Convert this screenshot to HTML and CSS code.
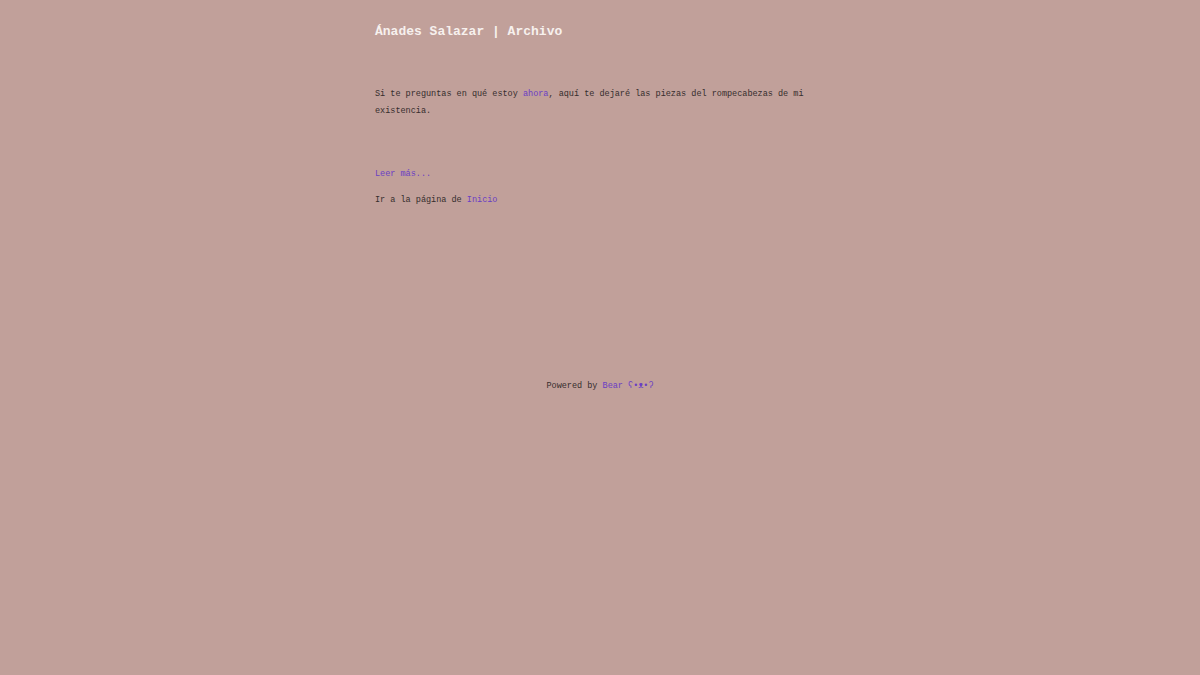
FILE: index.html
```html
<!DOCTYPE html>
<html lang="es">
<head>
<meta charset="utf-8">
<title>Ánades Salazar | Archivo</title>
<link rel="stylesheet" href="styles.css">
</head>
<body>
<div class="page">
  <header class="site-header">
    <a class="title" href="#"><h1>Ánades Salazar | Archivo</h1></a>
  </header>
  <main class="content">
    <p class="intro">Si te preguntas en qué estoy <a href="#">ahora</a>, aquí te dejaré las piezas del rompecabezas de mi existencia.</p>
    <p class="more"><a href="#">Leer más...</a></p>
    <p class="home">Ir a la página de <a href="#">Inicio</a></p>
  </main>
  <footer class="site-footer">
    Powered by <a href="#">Bear ʕ•ᴥ•ʔ</a>
  </footer>
</div>
</body>
</html>
```
FILE: styles.css
```css
html, body {
  margin: 0;
  padding: 0;
  background: #c1a09a;
  height: 100%;
}
body {
  font-family: "Liberation Mono", "DejaVu Sans Mono", monospace;
  font-size: 8.5px;
  line-height: 17px;
  color: #352d2d;
}
.page {
  width: 450px;
  margin: 0 auto;
  padding-top: 22px;
}
.title {
  text-decoration: none;
}
.site-header h1 {
  margin: 0;
  font-size: 13px;
  line-height: 20px;
  font-weight: bold;
  color: #f7f1ee;
}
.content {
  margin-top: 43.5px;
}
.content p {
  margin: 0;
}
a {
  color: #6a3ec4;
  text-decoration: none;
}
.intro {
  margin-bottom: 46px !important;
}
.more {
  margin-bottom: 9px !important;
}
.site-footer {
  margin-top: 169px;
  text-align: center;
}
```
